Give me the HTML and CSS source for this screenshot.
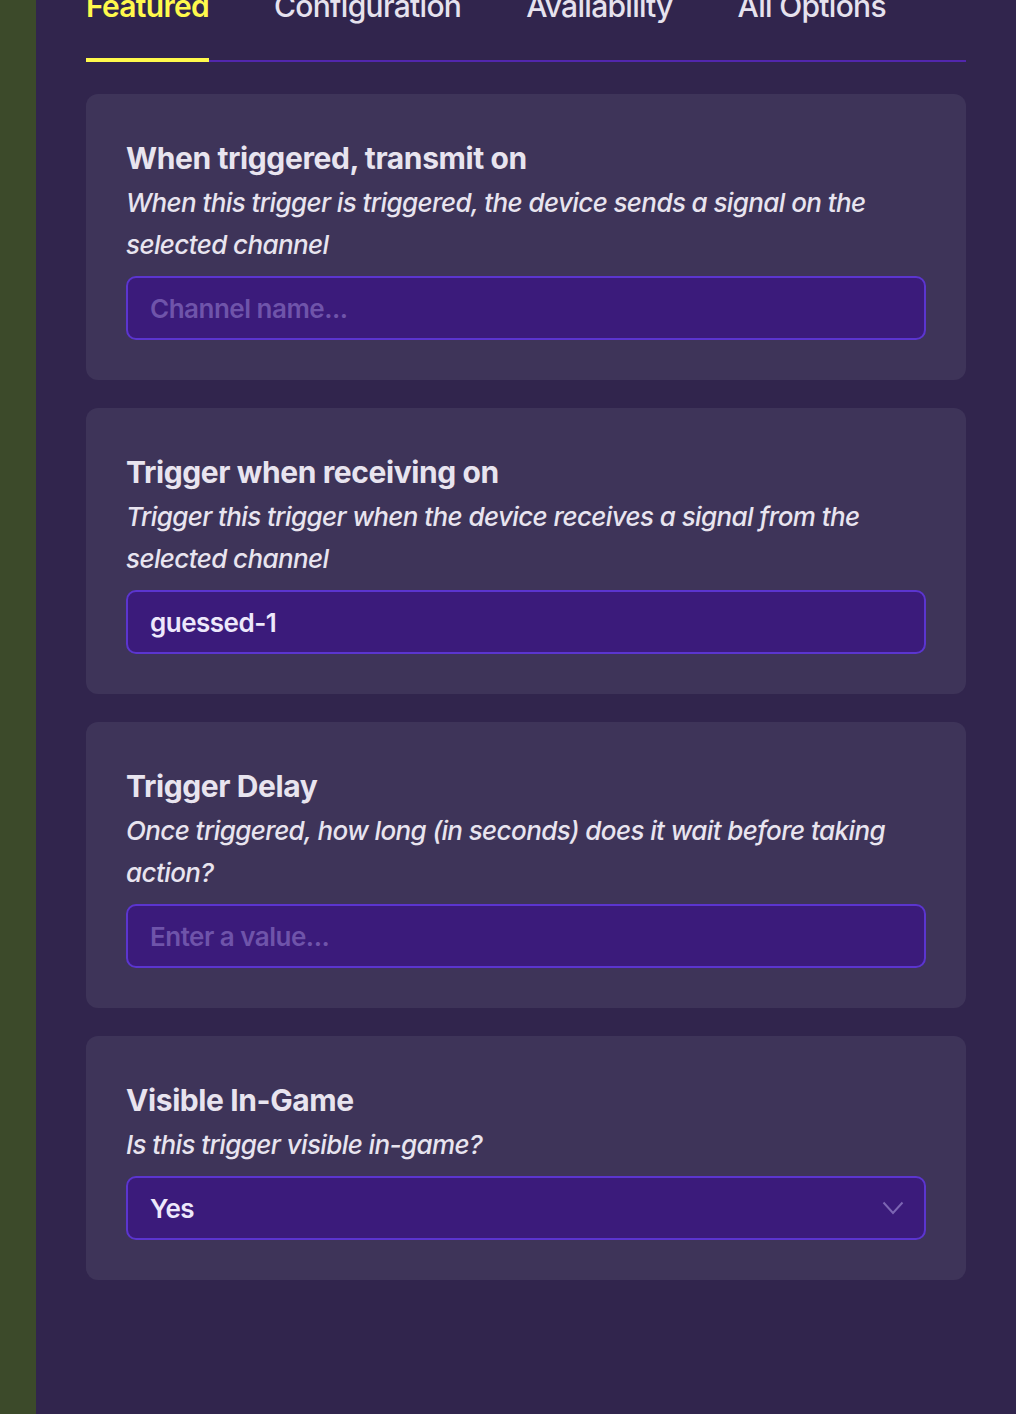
FILE: index.html
```html
<!DOCTYPE html>
<html>
<head>
<meta charset="utf-8">
<link rel="stylesheet" href="styles.css">
</head>
<body>
<div class="page">
  <div class="grass"></div>
  <div class="panel">
    <div class="tabs">
      <div class="tab active">Featured</div>
      <div class="tab">Configuration</div>
      <div class="tab">Availability</div>
      <div class="tab">All Options</div>
    </div>
    <div class="cards">
      <div class="card">
        <div class="title">When triggered, transmit on</div>
        <div class="desc">When this trigger is triggered, the device sends a signal on the selected channel</div>
        <div class="field placeholder">Channel name...</div>
      </div>
      <div class="card">
        <div class="title">Trigger when receiving on</div>
        <div class="desc">Trigger this trigger when the device receives a signal from the selected channel</div>
        <div class="field">guessed-1</div>
      </div>
      <div class="card">
        <div class="title">Trigger Delay</div>
        <div class="desc">Once triggered, how long (in seconds) does it wait before taking action?</div>
        <div class="field placeholder">Enter a value...</div>
      </div>
      <div class="card">
        <div class="title">Visible In-Game</div>
        <div class="desc">Is this trigger visible in-game?</div>
        <div class="field select">
          <span>Yes</span>
          <svg class="chev" width="22" height="14" viewBox="0 0 22 14"><path d="M1.5 1.5 L11 12 L20.5 1.5" fill="none" stroke="#7c66b3" stroke-width="2"/></svg>
        </div>
      </div>
    </div>
  </div>
</div>
</body>
</html>
```
FILE: styles.css
```css
html, body {
  margin: 0;
  padding: 0;
  background: #31254d;
  font-family: Inter, "Noto Sans", sans-serif;
}
.page {
  display: flex;
  min-height: 1414px;
  overflow: hidden;
}
.grass {
  width: 36px;
  flex: none;
  background: #3c4a2a;
}
.panel {
  flex: 1;
  background: #31254d;
  padding: 0 50px 0 50px;
}
.tabs {
  display: flex;
  gap: 65px;
  margin-top: -9px;
  border-bottom: 2px solid #5227ad;
}
.tab {
  font-size: 30px;
  line-height: 30px;
  font-weight: 500;
  color: #e6e2ee;
  padding-bottom: 37px;
  border-bottom: 4px solid transparent;
  margin-bottom: -2px;
  letter-spacing: -0.7px;
}
.tab.active {
  color: #fff94c;
  border-bottom-color: #fff94c;
  font-weight: 600;
}
.cards {
  display: flex;
  flex-direction: column;
  gap: 28px;
  margin-top: 32px;
}
.card {
  background: #3e3459;
  border-radius: 12px;
  padding: 40px 40px 40px 40px;
}
.title {
  font-size: 30px;
  line-height: 48px;
  font-weight: 700;
  color: #e8e4ef;
  letter-spacing: -0.4px;
}
.desc {
  font-size: 26px;
  line-height: 42px;
  font-style: italic;
  font-weight: 500;
  color: #e8e4ef;
  letter-spacing: -0.6px;
}
.field {
  margin-top: 10px;
  height: 64px;
  box-sizing: border-box;
  border: 2px solid #5b35cf;
  background: #3b1b7b;
  border-radius: 10px;
  padding: 0 22px;
  display: flex;
  align-items: center;
  font-size: 26px;
  font-weight: 600;
  color: #ede8fb;
  letter-spacing: -0.5px;
}
.field.placeholder {
  color: #6f54aa;
  font-weight: 600;
}
.field.select {
  justify-content: space-between;
}
.chev {
  margin-right: -2px;
}
```
